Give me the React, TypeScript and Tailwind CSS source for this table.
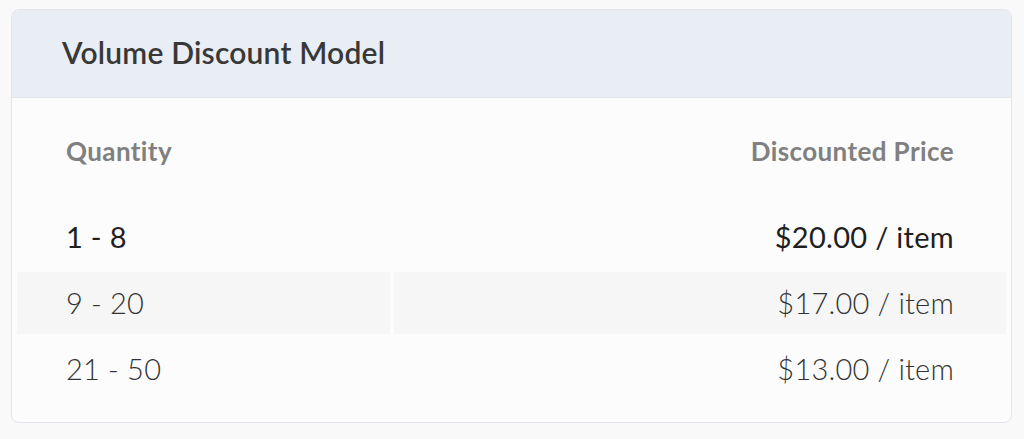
import React from "react";

const rows = [
    { qty: "1 - 8", price: "$20.00 / item", strong: true },
    { qty: "9 - 20", price: "$17.00 / item", striped: true },
    { qty: "21 - 50", price: "$13.00 / item" },
];

export default function App() {
    return (
        <div className="min-h-[439px] bg-[#f9f9f9] pt-[9px] pl-[11px] pr-[12px] font-['Lato',sans-serif]">
            <div className="rounded-lg border border-[#e2e6ec] bg-[#fcfcfc] overflow-hidden">
                {/* Card header */}
                <div className="h-[88px] bg-[#e9edf4] border-b border-[#e2e6ec] flex items-center pl-[50px] pb-[3px]">
                    <h2 className="text-[30px] font-semibold text-[#383838] tracking-[0.2px]">Volume Discount Model</h2>
                </div>

                <div className="px-[5px] pt-[22px] pb-[22px]">
                    <div className="grid grid-cols-[373px_1fr] gap-x-[4px] h-[62px] mb-[24px] text-[26px] font-bold text-[#808080] tracking-[0.4px]">
                        <div className="flex items-center pl-[49px]">Quantity</div>
                        <div className="flex items-center justify-end pr-[52px]">Discounted Price</div>
                    </div>

                    <div className="flex flex-col gap-[4px]">
                        {rows.map((row) => (
                            <div
                                key={row.qty}
                                className={`grid grid-cols-[373px_1fr] gap-x-[4px] h-[62px] text-[29px] ${row.strong ? "font-normal text-[#1f1f1f] tracking-[0.3px]" : "font-light text-[#333] tracking-[0.2px]"}`}
                            >
                                <div className={`flex items-center pl-[49px] ${row.striped ? "bg-[#f6f6f6]" : ""}`}>{row.qty}</div>
                                <div className={`flex items-center justify-end pr-[52px] ${row.striped ? "bg-[#f6f6f6]" : ""}`}>{row.price}</div>
                            </div>
                        ))}
                    </div>
                </div>
            </div>
        </div>
    );
}
